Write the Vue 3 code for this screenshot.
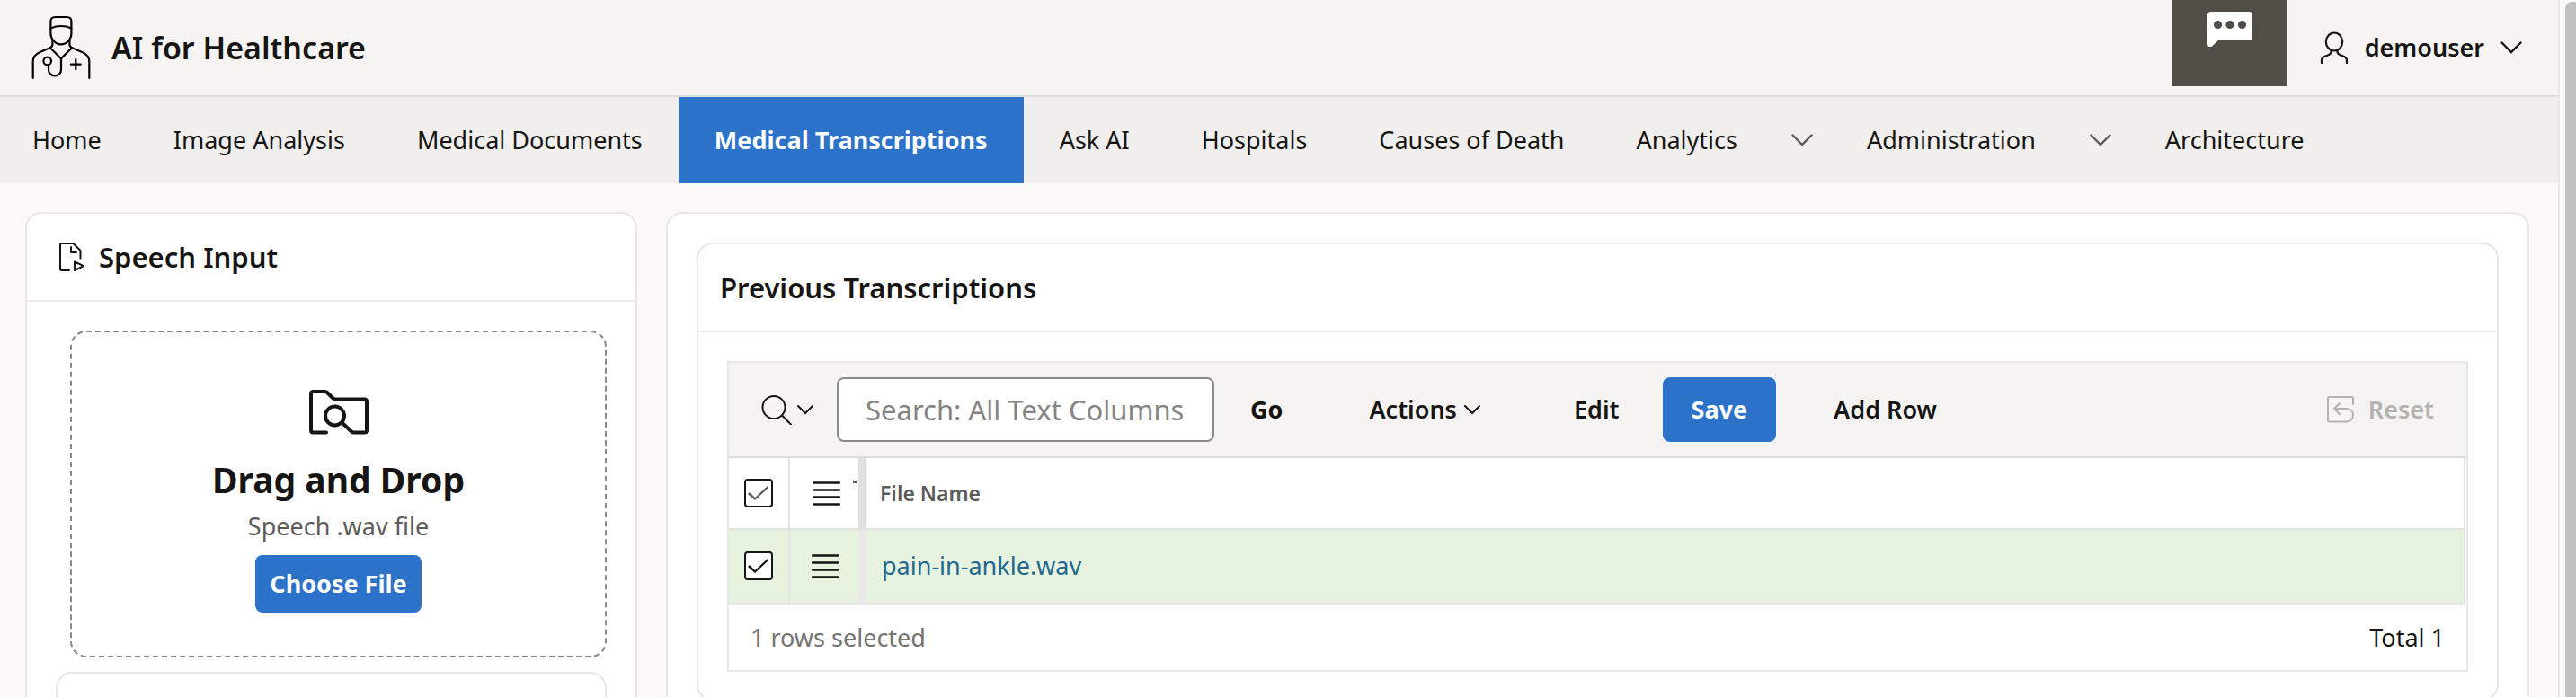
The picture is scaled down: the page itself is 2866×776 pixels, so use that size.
<script setup>
import { ref } from 'vue'

const navItems = [
  { label: 'Home' },
  { label: 'Image Analysis' },
  { label: 'Medical Documents' },
  { label: 'Medical Transcriptions', active: true },
  { label: 'Ask AI' },
  { label: 'Hospitals' },
  { label: 'Causes of Death' },
  { label: 'Analytics', menu: true },
  { label: 'Administration', menu: true },
  { label: 'Architecture' },
]

const rows = ref([{ name: 'pain-in-ankle.wav', selected: true }])
const allSelected = ref(true)
const search = ref('')
</script>

<template>
  <div class="shell">
    <div class="page">
      <header class="header">
        <a class="brand" href="#">
          <svg class="logo" viewBox="0 0 68 72" fill="none" stroke="#000" stroke-width="2.2" stroke-linecap="round" stroke-linejoin="round">
            <path d="M22.4 20V7Q22.4 2 27.4 2H40.4Q45.4 2 45.4 7V20C45.4 27 40 32.4 33.9 32.4C27.800 32.4 22.4 27 22.4 20Z" />
            <path d="M22.4 14.400Q33.9 9.600 45.4 14.400" />
            <path d="M24.400 28V32.500Q24.400 35 21.500 36.200L10 41.200Q2.700 44.500 2.700 51.500V70" />
            <path d="M43.400 28V32.500Q43.400 35 46.300 36.200L57.800 41.200Q65.300 44.500 65.300 51.500V70" />
            <path d="M21.800 36.200L33.9 48.300L46 36.200" />
            <circle cx="18.700" cy="51" r="4.300" />
            <path d="M20 55.300V60.500C20 64.500 23 67.300 27 67.300S34 64.500 34 60.500V48.500M50.300 49.200V60.200M44.800 54.700H55.800" />
          </svg>
          <span>AI for Healthcare</span>
        </a>
        <div class="header-tools">
          <button class="chat" type="button" aria-label="Chat">
            <svg viewBox="0 0 50 40">
              <path fill="#fff" d="M4 0H46Q50 0 50 4V28Q50 32 46 32H12L5 38.500Q0 40.500 0 36V4Q0 0 4 0Z" />
              <g fill="#514d47"><circle cx="11.500" cy="14.500" r="4.600" /><circle cx="25" cy="14.500" r="4.600" /><circle cx="38.500" cy="14.500" r="4.600" /></g>
            </svg>
          </button>
          <button class="user" type="button">
            <svg class="person" viewBox="0 0 32 36" fill="none" stroke="#161513" stroke-width="2.200" stroke-linecap="round">
              <ellipse cx="16" cy="11.500" rx="9.200" ry="10" />
              <path d="M12.500 21.500V22.500Q12.500 25 9.500 26.200L6 27.600Q2 29.200 2 32V35M19.500 21.500V22.500Q19.500 25 22.500 26.200L26 27.600Q30 29.200 30 32V35" />
            </svg>
            <span>demouser</span>
            <svg class="caret" viewBox="0 0 24 14"><path d="M1.500 1.500L12 12L22.500 1.500" /></svg>
          </button>
        </div>
      </header>

      <nav class="nav" aria-label="Main">
        <div v-for="item in navItems" :key="item.label" class="nav-item" :class="{ active: item.active }">
          <a href="#">{{ item.label }}</a>
          <button v-if="item.menu" type="button" :aria-label="item.label + ' menu'">
            <svg class="caret" viewBox="0 0 24 14"><path d="M1.500 1.500L12 12L22.500 1.500" /></svg>
          </button>
        </div>
      </nav>

      <main class="content">
        <section class="panel speech">
          <div class="speech-head">
            <svg viewBox="0 0 28 32" fill="none" stroke="#161513" stroke-width="2" stroke-linecap="round" stroke-linejoin="round">
              <path d="M11 31H2.500Q1 31 1 29.500V2.500Q1 1 2.500 1H15.500L23.500 9V17.500M13 5V11H19" />
              <path d="M17 21.500V31L27 26.200Z" />
            </svg>
            <h2>Speech Input</h2>
          </div>
          <div class="speech-body">
            <div class="drop">
              <svg viewBox="0 0 66 50" fill="none" stroke="#161513" stroke-width="4" stroke-linecap="round" stroke-linejoin="round">
                <path d="M19 47.500H4.500Q2 47.500 2 45V4.500Q2 2 4.500 2H17.500Q19 2 20 3L26 9Q27.500 10.500 29.500 10.500H61.500Q64 10.500 64 13V45Q64 47.500 61.500 47.500H49.500Q48 47.500 47 46.500L37 37" />
                <circle cx="28.500" cy="29" r="10.500" />
              </svg>
              <h3>Drag and Drop</h3>
              <p>Speech .wav file</p>
              <button class="primary choose" type="button">Choose File</button>
            </div>
            <div class="subpanel"></div>
          </div>
        </section>

        <section class="panel results">
          <div class="report">
            <div class="report-head"><h2>Previous Transcriptions</h2></div>
            <div class="grid">
              <div class="toolbar">
                <button class="finder" type="button" aria-label="Select columns to search">
                  <svg class="lens" viewBox="0 0 34 33"><circle cx="14" cy="13.500" r="12.500" /><path d="M23 22.500L33 32.500" /></svg>
                  <svg class="caret small" viewBox="0 0 18 11"><path d="M1 1L9 9L17 1" /></svg>
                </button>
                <input v-model="search" class="search" type="text" aria-label="Search" placeholder="Search: All Text Columns" />
                <button class="go" type="button">Go</button>
                <button class="actions" type="button">
                  Actions
                  <svg class="caret small" viewBox="0 0 18 11"><path d="M1 1L9 9L17 1" /></svg>
                </button>
                <button class="edit" type="button">Edit</button>
                <button class="primary save" type="button">Save</button>
                <button class="add" type="button">Add Row</button>
                <button class="reset" type="button" disabled>
                  <svg viewBox="0 0 30 30" fill="none" stroke="currentColor" stroke-width="2" stroke-linecap="round" stroke-linejoin="round">
                    <path d="M29 9V2.500Q29 1 27.500 1H2.500Q1 1 1 2.500V27Q1 28.500 2.500 28.500H21C26 28.500 29 25.500 29 21.200S26 14 21 14H8M14 8L8 14L14 20.200" />
                  </svg>
                  Reset
                </button>
              </div>

              <table>
                <thead>
                  <tr>
                    <th class="check"><input v-model="allSelected" type="checkbox" aria-label="Select all rows" /></th>
                    <th class="menu">
                      <button type="button" aria-label="Grid actions">
                        <svg class="bars" viewBox="0 0 31 27"><path d="M1 1.500H30M1 9.500H30M1 17.500H30M1 25.500H30" /></svg>
                      </button>
                      <span class="mark"></span>
                    </th>
                    <th class="name">File Name</th>
                  </tr>
                </thead>
                <tbody>
                  <tr v-for="row in rows" :key="row.name">
                    <td class="check"><input v-model="row.selected" type="checkbox" :aria-label="'Select ' + row.name" /></td>
                    <td class="menu">
                      <button type="button" aria-label="Row actions">
                        <svg class="bars" viewBox="0 0 31 27"><path d="M1 1.500H30M1 9.500H30M1 17.500H30M1 25.500H30" /></svg>
                      </button>
                    </td>
                    <td class="name"><a href="#">{{ row.name }}</a></td>
                  </tr>
                </tbody>
              </table>

              <div class="footer">
                <span class="count">1 rows selected</span>
                <span>Total 1</span>
              </div>
            </div>
          </div>
        </section>
      </main>
    </div>
    <div class="scroll" aria-hidden="true"><div class="thumb"></div></div>
  </div>
</template>

<style>
body {
  background: #fbf9f8;
}
</style>

<style scoped>
* {
  box-sizing: border-box;
}
.shell {
  display: grid;
  grid-template-columns: minmax(0, 1fr) 20px;
  height: 100vh;
  overflow: hidden;
  background: #fbf9f8;
  color: #161513;
  font-family: "Noto Sans", "Open Sans", sans-serif;
  font-size: 27px;
  line-height: 40px;
}
.page {
  min-width: 0;
}
h2,
h3,
p {
  margin: 0;
}
h2 {
  font-size: 31px;
  font-weight: 600;
  line-height: 40px;
}
button,
input {
  font: inherit;
  color: inherit;
}
button {
  display: flex;
  align-items: center;
  justify-content: center;
  margin: 0;
  padding: 0;
  border: 0;
  background: none;
  white-space: nowrap;
}
a {
  color: inherit;
  text-decoration: none;
  white-space: nowrap;
}
svg {
  display: block;
  flex: none;
}
.caret {
  width: 24px;
  height: 14px;
  fill: none;
  stroke: #161513;
  stroke-width: 2.4px;
  stroke-linecap: round;
}
.caret.small {
  width: 18px;
  height: 11px;
  stroke-width: 2px;
}
.header {
  display: flex;
  justify-content: space-between;
  height: 108px;
  padding: 0 40px 0 34px;
  background: #f5f4f2;
  border-bottom: 2px solid #dddcda;
}
.brand {
  display: flex;
  align-items: center;
  gap: 22px;
  font-size: 34px;
  font-weight: 600;
}
.logo {
  width: 68px;
  height: 72px;
}
.header-tools {
  display: flex;
  gap: 36px;
}
.chat {
  align-items: flex-start;
  width: 128px;
  height: 96px;
  padding-top: 13px;
  background: #514d47;
}
.chat svg {
  width: 50px;
  height: 40px;
}
.user {
  gap: 18px;
  font-weight: 600;
}
.person {
  width: 32px;
  height: 36px;
}
.nav {
  display: flex;
  height: 96px;
  padding-right: 40px;
  background: #f0efed;
}
.nav-item {
  display: flex;
  align-items: center;
  padding: 0 40px;
}
.nav-item:first-child {
  padding-left: 36px;
}
.nav-item.active {
  background: #2c72c8;
  color: #fff;
  font-weight: 700;
}
.nav-item button {
  width: 24px;
  height: 40px;
  margin-left: 60px;
  margin-right: -20px;
}
.nav-item .caret {
  stroke: #5c5b59;
}
.content {
  display: grid;
  grid-template-columns: 681px minmax(0, 1fr);
  gap: 32px;
  padding: 32px 32px 32px 28px;
}
.panel,
.report,
.subpanel {
  background: #fff;
  border: 2px solid #e8e7e6;
  border-radius: 18px;
}
.speech-head {
  display: flex;
  align-items: center;
  gap: 16px;
  height: 98px;
  padding-left: 36px;
  border-bottom: 2px solid #ecebea;
}
.speech-head svg {
  width: 28px;
  height: 32px;
}
.speech-body {
  padding: 32px;
}
.drop {
  display: flex;
  flex-direction: column;
  align-items: center;
  height: 364px;
  margin-left: 16px;
  padding-top: 64px;
  border: 2px dashed #8b8a88;
  border-radius: 18px;
}
.drop svg {
  width: 66px;
  height: 50px;
}
.drop h3 {
  margin-top: 22px;
  font-size: 39px;
  font-weight: 700;
  line-height: 56px;
}
.drop p {
  margin: 4px 0 12px;
  color: #5c5b59;
}
.primary {
  background: #2c72c8;
  border-radius: 8px;
  color: #fff;
  font-weight: 700;
}
.choose {
  height: 64px;
  padding: 0 16px;
}
.subpanel {
  height: 160px;
  margin-top: 16px;
}
.results {
  padding: 32px;
}
.report {
  padding-bottom: 30px;
}
.report-head {
  display: flex;
  align-items: center;
  height: 98px;
  padding: 0 24px;
  border-bottom: 2px solid #ecebea;
}
.grid {
  margin: 32px 32px 0;
  border: 2px solid #e8e7e6;
}
.toolbar {
  display: flex;
  align-items: center;
  height: 106px;
  padding: 0 36px;
  background: #f5f4f2;
  border-bottom: 2px solid #dddcdb;
  font-weight: 600;
}
.finder {
  gap: 6px;
  height: 72px;
  margin-right: 26px;
}
.lens {
  width: 34px;
  height: 33px;
  fill: none;
  stroke: #161513;
  stroke-width: 2px;
  stroke-linecap: round;
}
.search {
  width: 420px;
  height: 72px;
  padding: 0 28px 0 30px;
  background: #fff;
  border: 2px solid #8b8a88;
  border-radius: 8px;
  font-size: 31px;
  font-weight: 400;
}
.search::placeholder {
  color: #858482;
  opacity: 1;
}
.go,
.edit,
.add,
.actions {
  height: 72px;
}
.go {
  margin-left: 40px;
  font-weight: 700;
}
.actions {
  gap: 8px;
  margin-left: 96px;
}
.edit {
  margin-left: 104px;
}
.save {
  height: 72px;
  margin-left: 48px;
  padding: 0 32px;
}
.add {
  margin-left: 64px;
}
.reset {
  gap: 16px;
  margin-left: auto;
  color: #b3b2b0;
}
.reset svg {
  width: 30px;
  height: 30px;
}
table {
  width: calc(100% - 1px);
  border-collapse: separate;
  border-spacing: 0;
  table-layout: fixed;
}
th,
td {
  height: 80px;
  padding: 0;
  border-bottom: 2px solid #e1e0df;
  text-align: left;
}
td {
  height: 84px;
  background: #e7f3de;
  border-bottom: 4px solid #e9e9e9;
}
.check {
  width: 68px;
  border-right: 2px solid #e3e2e1;
}
.menu {
  position: relative;
  width: 84px;
  border-right: 8px solid #e1e0df;
}
.menu button {
  width: 100%;
  height: 40px;
  padding-left: 4px;
}
td.menu {
  border-right-color: #e9e9e9;
}
td.menu button {
  padding-left: 2px;
}
.mark {
  position: absolute;
  top: 25px;
  right: 2px;
  width: 4px;
  height: 3px;
  background: #5c5b59;
}
.name {
  padding-left: 16px;
  border-right: 2px solid #e1e0df;
}
th.name {
  color: #5c5b59;
  font-size: 23px;
  font-weight: 600;
}
td.name {
  padding-left: 18px;
}
td.name a {
  color: #22678f;
}
input[type="checkbox"] {
  appearance: none;
  display: block;
  width: 32px;
  height: 32px;
  margin: 0 auto;
  background: #fff;
  border: 2px solid #161513;
  border-radius: 4px;
}
input[type="checkbox"]:checked::after {
  content: "";
  display: block;
  width: 24px;
  height: 18px;
  margin: 6px 2px;
  background: #161513;
  clip-path: polygon(0 9px, 2px 7px, 8px 13px, 22px 0, 23px 2px, 8px 16px);
}
th input[type="checkbox"]:checked::after {
  background: #5c5b59;
}
.bars {
  width: 31px;
  height: 27px;
  fill: none;
  stroke: #161513;
  stroke-width: 2.4px;
  stroke-linecap: round;
}
.footer {
  display: flex;
  align-items: center;
  justify-content: space-between;
  height: 72px;
  padding: 0 24px;
}
.count {
  color: #757472;
}
.scroll {
  padding: 2px 0 0 6px;
  background: #fafafa;
  border-left: 2px solid #e8e8e8;
}
.thumb {
  height: 1200px;
  background: #c1c1c1;
  border-radius: 8px 0 0 0;
}
</style>
